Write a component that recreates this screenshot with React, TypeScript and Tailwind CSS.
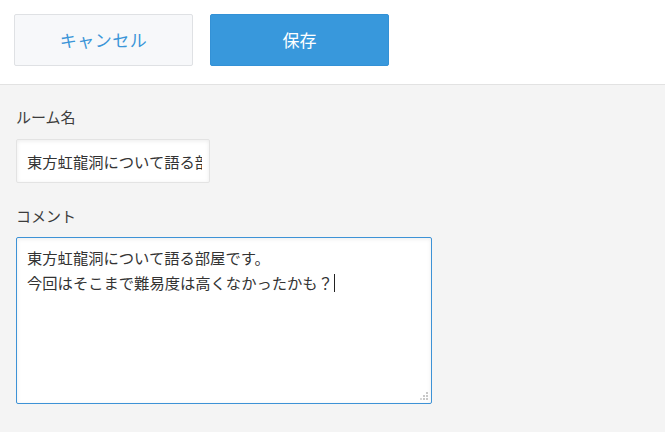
export default function App() {
  const font = { fontFamily: '"Noto Sans CJK JP", "Noto Sans", sans-serif' }
  return (
    <div className="w-[665px] h-[432px] bg-[#f4f4f4] text-[#333]" style={font}>
      <div className="h-[85px] bg-white border-b border-[#e2e2e2] flex items-start gap-[17px] pt-[14px] pl-[14px]">
        <button className="w-[179px] h-[52px] bg-[#f7f8fa] border border-[#dfe1e4] rounded-[2px] text-[#3a95d8] text-[17px] tracking-[0.5px]">
          キャンセル
        </button>
        <button className="w-[179px] h-[52px] bg-[#3898dc] border border-[#3391d6] rounded-[2px] text-white text-[17px]">
          保存
        </button>
      </div>
      <div className="px-4 pt-[21px]">
        <div className="text-[15px] leading-[22px] text-[#3c3c3c]">ルーム名</div>
        <div className="mt-[11px] w-[194px] h-[44px] bg-white border border-[#e3e3e3] rounded-[2px] shadow-[inset_0_1px_4px_rgba(0,0,0,0.08)] pl-[10px] pr-[7px] flex items-center overflow-hidden">
          <span className="whitespace-nowrap overflow-hidden text-[15.3px] text-[#333]">東方虹龍洞について語る部屋</span>
        </div>
        <div className="mt-[22px] text-[15px] leading-[22px] text-[#3c3c3c]">コメント</div>
        <div className="relative mt-[10px] w-[416px] h-[167px] bg-white border border-[#3d92d6] rounded-[2px] shadow-[inset_0_1px_4px_rgba(0,0,0,0.08)] px-[10px] pt-[7px] text-[15.3px] leading-[25px] text-[#333]">
          <div>東方虹龍洞について語る部屋です。</div>
          <div className="flex items-center">
            今回はそこまで難易度は高くなかったかも？
            <span className="inline-block w-px h-[18px] bg-[#222] ml-[1px]" />
          </div>
          <svg className="absolute right-[2px] bottom-[2px]" width="10" height="10" viewBox="0 0 10 10">
            <rect x="7" y="1" width="2" height="2" fill="#c8c8c8" />
            <rect x="4" y="4" width="2" height="2" fill="#c8c8c8" />
            <rect x="7" y="4" width="2" height="2" fill="#c8c8c8" />
            <rect x="1" y="7" width="2" height="2" fill="#d8d8d8" />
            <rect x="4" y="7" width="2" height="2" fill="#c8c8c8" />
            <rect x="7" y="7" width="2" height="2" fill="#c8c8c8" />
          </svg>
        </div>
      </div>
    </div>
  )
}
